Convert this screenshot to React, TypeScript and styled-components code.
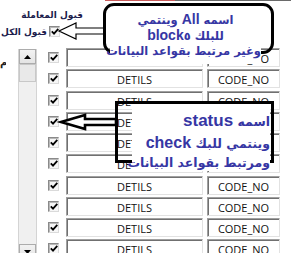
import React from "react";
import styled, { createGlobalStyle } from "styled-components";

const Global = createGlobalStyle`
  html, body { margin: 0; padding: 0; background: #ffffff; }
  body { width: 291px; height: 253px; overflow: hidden; }
`;

const Screen = styled.div`
  position: relative;
  width: 291px;
  height: 253px;
  overflow: hidden;
  background: #ffffff;
  font-family: "Open Sans", "DejaVu Sans", sans-serif;
`;

const TopLine = styled.div`
  height: 1px;
  margin-left: 105px;
  background: linear-gradient(to right, #c85a5a 0, #c85a5a 70px, #6a6a6a 70px);
`;

const Header = styled.div`
  height: 47px;
  display: flex;
  flex-direction: column;
`;

const Caption = styled.div`
  font-family: "DejaVu Sans", sans-serif;
  font-weight: bold;
  font-size: 9px;
  line-height: 12px;
  color: #1c1c4c;
  direction: rtl;
  white-space: nowrap;
`;

const TitleRow = styled.div`
  margin: 8px 0 0 23px;
  width: 60px;
  display: flex;
  justify-content: flex-end;
`;

const AllRow = styled.div`
  margin-top: 5px;
  display: flex;
  align-items: center;
  height: 11px;
`;

const AllLabel = styled.div`
  width: 47px;
  overflow: hidden;
  display: flex;
  justify-content: flex-end;
  margin-right: 2px;
`;

const Body = styled.div`
  display: flex;
  align-items: flex-start;
`;

const SideLabel = styled.div`
  width: 6px;
  margin-right: 12px;
  margin-top: 9px;
  overflow: hidden;
  display: flex;
  justify-content: flex-end;
  font-family: "DejaVu Sans", sans-serif;
  font-weight: bold;
  font-size: 10px;
  line-height: 12px;
  color: #202020;
  direction: rtl;
  white-space: nowrap;
`;

const ScrollBar = styled.div`
  margin-top: 1px;
  width: 19px;
  height: 210px;
  display: flex;
  flex-direction: column;
  background: #f0f0f0;
  border-left: 1px solid #d4d4d4;
  border-right: 1px solid #d4d4d4;
  box-sizing: border-box;
`;

const ScrollButton = styled.div`
  height: 15px;
  flex: none;
  box-sizing: border-box;
  border: 1px solid #acacac;
  background: linear-gradient(#f2f2f2, #e4e4e4);
  display: flex;
  align-items: center;
  justify-content: center;
`;

const Thumb = styled.div`
  height: 18px;
  flex: none;
  box-sizing: border-box;
  border: 1px solid #c8c8c8;
  background: #e9e9e9;
`;

const Track = styled.div`
  flex: 1;
`;

const Rows = styled.div`
  margin-left: 11px;
  display: flex;
  flex-direction: column;
  gap: 2.25px;
`;

const Row = styled.div`
  display: flex;
  align-items: center;
  height: 19px;
`;

const CheckBox = styled.span`
  width: 11px;
  height: 11px;
  box-sizing: border-box;
  flex: none;
  border-top: 1px solid #8a8a8a;
  border-left: 1px solid #8a8a8a;
  border-right: 1px solid #dadada;
  border-bottom: 1px solid #dadada;
  background: #f6f6f6;
  box-shadow: inset 1px 1px 0 #b8b8b8;
  display: flex;
  align-items: center;
  justify-content: center;
`;

const Field = styled.div<{ $w: number }>`
  width: ${(p) => p.$w}px;
  height: 19px;
  box-sizing: border-box;
  flex: none;
  border-top: 1px solid #a0a0a0;
  border-left: 1px solid #a0a0a0;
  border-right: 1px solid #e2e2e2;
  border-bottom: 1px solid #e2e2e2;
  box-shadow: inset 1px 1px 0 #707070;
  background: #ffffff;
  font-family: "Open Sans", sans-serif;
  font-size: 11px;
  line-height: 19px;
  color: #111111;
  text-align: center;
  overflow: hidden;
  white-space: nowrap;
`;

const FirstField = styled(Field)`
  margin-left: 7px;
`;

const SecondField = styled(Field)`
  margin-left: 4px;
`;

const ArrowSvg = styled.svg<{ $x: number; $y: number }>`
  position: absolute;
  left: ${(p) => p.$x}px;
  top: ${(p) => p.$y}px;
  overflow: visible;
`;

const CalloutOne = styled.div`
  position: absolute;
  left: 103px;
  top: 3px;
  width: 171px;
  height: 62px;
`;

const RoundFrame = styled.div`
  position: absolute;
  left: 0;
  top: 0;
  width: 171px;
  height: 51px;
  box-sizing: border-box;
  border: 3px solid #000000;
  border-radius: 11px;
`;

const CalloutTwo = styled.div`
  position: absolute;
  left: 115px;
  top: 101px;
  width: 159px;
  height: 68px;
`;

const SquareFrame = styled.div`
  position: absolute;
  left: 0;
  top: 0;
  width: 159px;
  height: 62px;
  box-sizing: border-box;
  border: 3px solid #000000;
`;

const NoteOne = styled.div`
  position: relative;
  margin: 9px 0 0 7px;
  width: 151px;
  display: flex;
  flex-direction: column;
  align-items: center;
  direction: rtl;
  font-family: "DejaVu Sans", sans-serif;
  font-weight: bold;
  font-size: 11.5px;
  color: #3636a4;
  white-space: nowrap;
`;

const NoteLine = styled.div<{ $lh: number; $bg?: boolean; $pb?: number }>`
  line-height: ${(p) => p.$lh}px;
  background: ${(p) => (p.$bg ? "#ffffff" : "transparent")};
  padding-bottom: ${(p) => p.$pb ?? 0}px;
  align-self: stretch;
  text-align: center;
`;

const NoteTwo = styled.div`
  position: relative;
  margin: 3px 0 0 17px;
  width: 138px;
  padding-top: 6px;
  background: #ffffff;
  direction: rtl;
  text-align: right;
  font-family: "DejaVu Sans", sans-serif;
  font-weight: bold;
  font-size: 12.5px;
  color: #3636a4;
  white-space: nowrap;
`;

const NoteTwoLine = styled.div<{ $lh: number }>`
  line-height: ${(p) => p.$lh}px;
`;

const Latin = styled.span<{ $size: number }>`
  font-family: "Liberation Sans", Arial, sans-serif;
  font-weight: bold;
  font-size: ${(p) => p.$size}px;
`;

const Check = () => (
  <svg width="8" height="7" viewBox="0 0 8 7">
    <path d="M0.8 3.4 L3 5.6 L7.3 0.9" fill="none" stroke="#000" strokeWidth="1.8" />
  </svg>
);

const rows = Array.from({ length: 10 }, (_, i) => i);

export default function App() {
  return (
    <Screen>
      <Global />
      <TopLine />
      <Header>
        <TitleRow>
          <Caption>قبول المعاملة</Caption>
        </TitleRow>
        <AllRow>
          <AllLabel>
            <Caption>قبول الكل</Caption>
          </AllLabel>
          <CheckBox>
            <Check />
          </CheckBox>
        </AllRow>
      </Header>
      <Body>
        <SideLabel>إم</SideLabel>
        <ScrollBar>
          <ScrollButton>
            <svg width="7" height="4" viewBox="0 0 7 4">
              <path d="M0 4 L3.5 0 L7 4 Z" fill="#000" />
            </svg>
          </ScrollButton>
          <Thumb />
          <Track />
          <ScrollButton>
            <svg width="7" height="4" viewBox="0 0 7 4">
              <path d="M0 0 L3.5 4 L7 0 Z" fill="#000" />
            </svg>
          </ScrollButton>
        </ScrollBar>
        <Rows>
          {rows.map((i) => (
            <Row key={i}>
              <CheckBox>
                <Check />
              </CheckBox>
              <FirstField $w={137}>DETILS</FirstField>
              <SecondField $w={73}>CODE_NO</SecondField>
            </Row>
          ))}
        </Rows>
      </Body>

      <ArrowSvg $x={56} $y={20} width="52" height="22">
        <polygon
          points="3,11 20,3 20,8 49,8 49,14 20,14 20,19"
          fill="#ffffff"
          stroke="#000000"
          strokeWidth="1.2"
          strokeLinejoin="miter"
        />
      </ArrowSvg>

      <CalloutOne>
        <RoundFrame />
        <NoteOne>
          <NoteLine $lh={15}>
            اسمه <Latin $size={14}>All</Latin> وينتمي
          </NoteLine>
          <NoteLine $lh={15}>
            للبلك <Latin $size={14}>block</Latin>٥
          </NoteLine>
          <NoteLine $lh={15} $bg $pb={5}>
            وغير مرتبط بقواعد البيانات
          </NoteLine>
        </NoteOne>
      </CalloutOne>

      <CalloutTwo>
        <SquareFrame />
        <NoteTwo>
          <NoteTwoLine $lh={21}>
            اسمه <Latin $size={17}>status</Latin>
          </NoteTwoLine>
          <NoteTwoLine $lh={21}>
            وينتمي للبك <Latin $size={16}>check</Latin>
          </NoteTwoLine>
          <NoteTwoLine $lh={17}>ومرتبط بقواعد البيانات</NoteTwoLine>
        </NoteTwo>
      </CalloutTwo>

      <ArrowSvg $x={56} $y={110} width="62" height="24">
        <polygon
          points="5,12 29,5 29,9 60,9 60,15 29,15 29,19"
          fill="#ffffff"
          stroke="#000000"
          strokeWidth="2.6"
          strokeLinejoin="miter"
        />
      </ArrowSvg>
    </Screen>
  );
}
